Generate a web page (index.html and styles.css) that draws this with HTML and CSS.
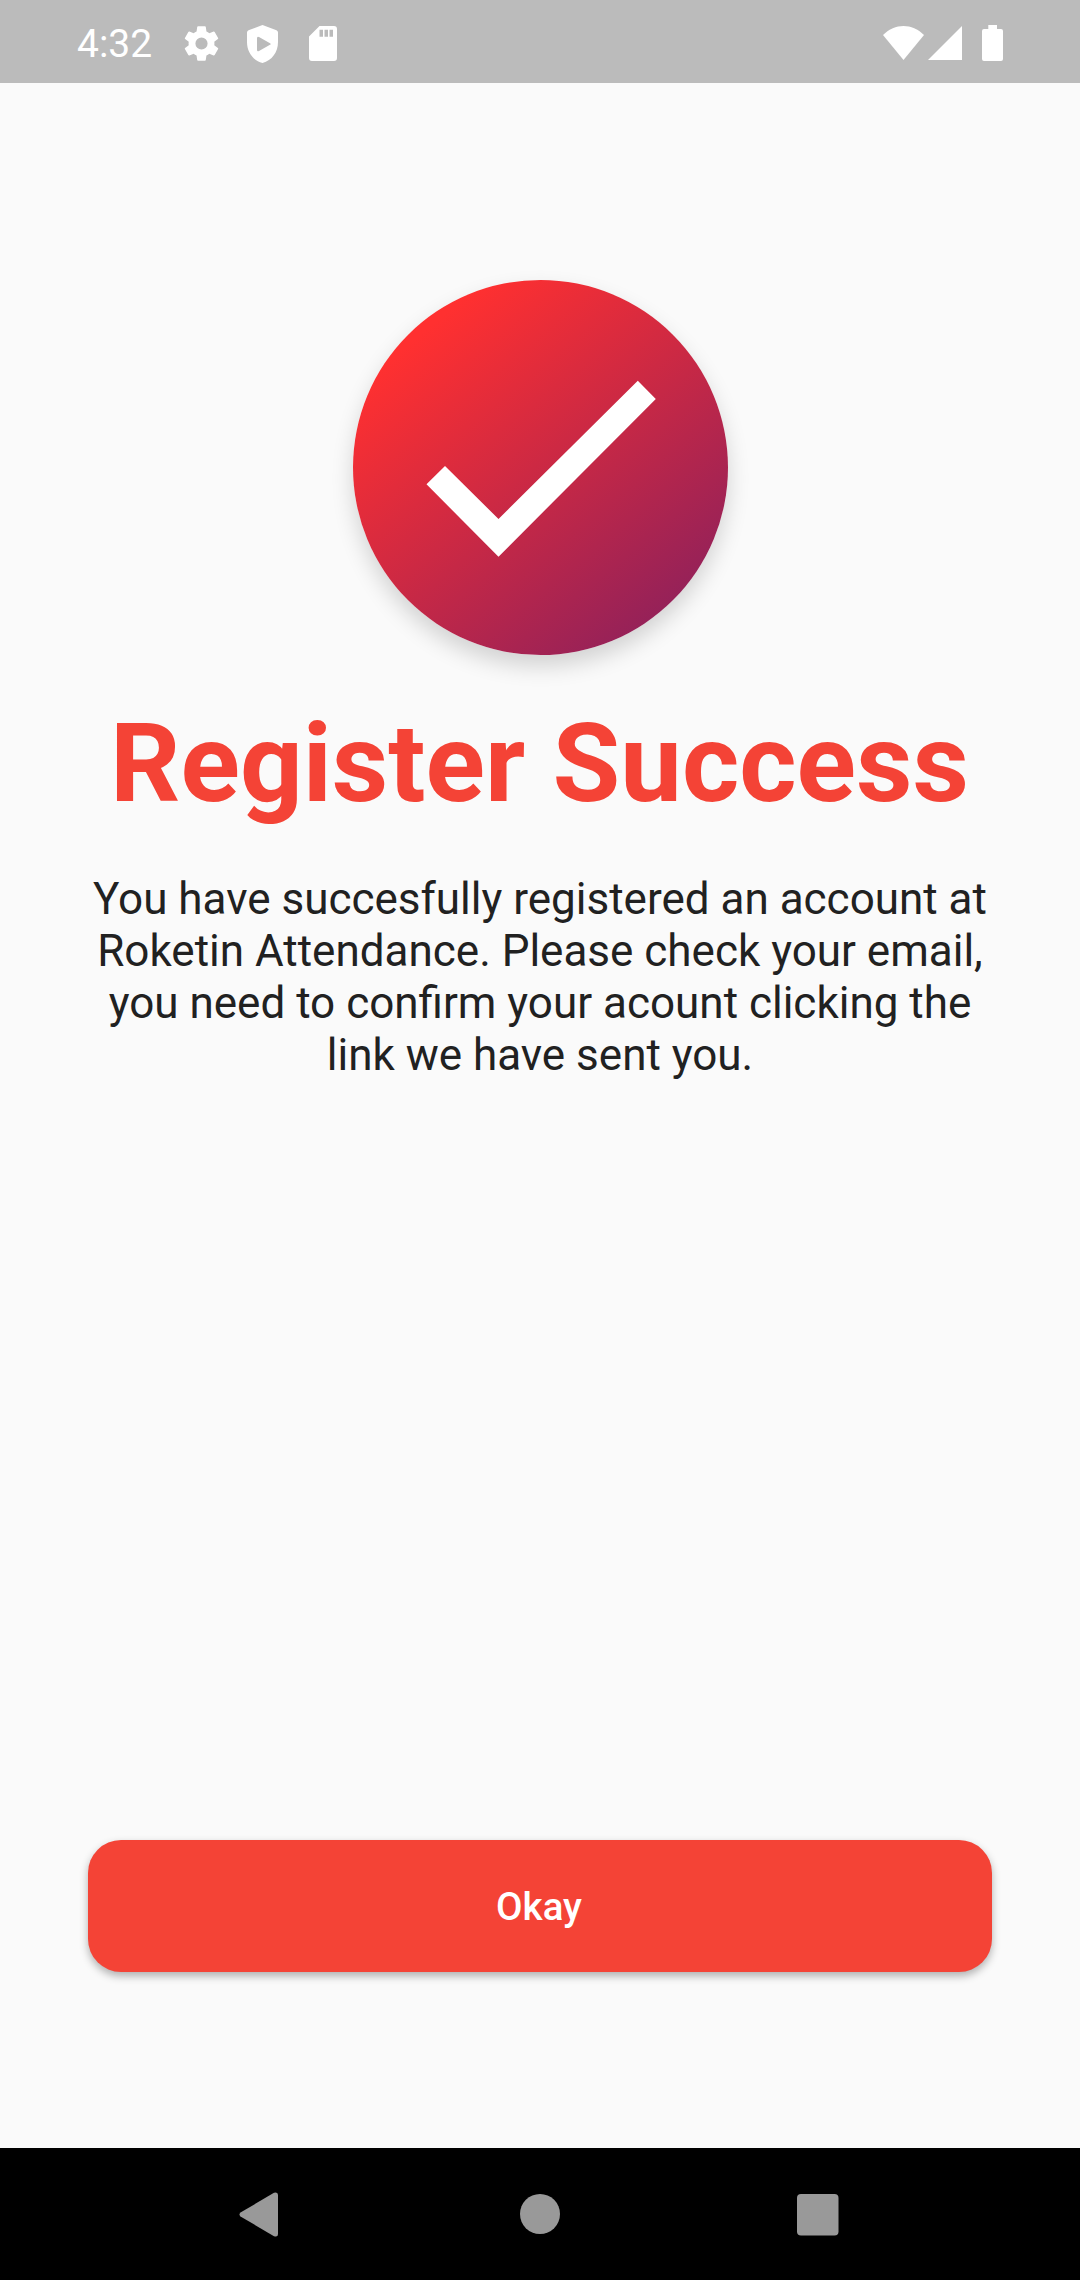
FILE: index.html
```html
<!DOCTYPE html>
<html lang="en">
<head>
<meta charset="utf-8">
<title>Register Success</title>
<link rel="stylesheet" href="styles.css">
</head>
<body>
<header class="status">
  <span class="time">4:32</span>
  <svg class="gear" viewBox="0 0 24 24"><path d="M19.14 12.94c.04-.3.06-.61.06-.94 0-.32-.02-.64-.07-.94l2.03-1.58a.49.49 0 0 0 .12-.61l-1.92-3.32a.49.49 0 0 0-.59-.22l-2.39.96a7 7 0 0 0-1.62-.94l-.36-2.54a.48.48 0 0 0-.48-.41h-3.84a.48.48 0 0 0-.47.41l-.36 2.54c-.59.24-1.13.57-1.62.94l-2.39-.96a.48.48 0 0 0-.59.22L2.74 8.87a.48.48 0 0 0 .12.61l2.03 1.58c-.05.3-.09.63-.09.94s.02.64.07.94l-2.03 1.58a.49.49 0 0 0-.12.61l1.92 3.32c.12.22.37.29.59.22l2.39-.96c.5.38 1.03.7 1.62.94l.36 2.54c.05.24.24.41.48.41h3.84c.24 0 .44-.17.47-.41l.36-2.54a7 7 0 0 0 1.62-.94l2.39.96c.22.08.47 0 .59-.22l1.92-3.32a.48.48 0 0 0-.12-.61zM12 15.4a3.4 3.4 0 1 1 0-6.800 3.400 3.400 0 0 1 0 6.800z"/></svg>
  <svg class="shield" viewBox="0 0 31 38"><path fill-rule="evenodd" d="M15.500 0 1.500 5.300Q0 6 0 7.500V17C0 27 6 35.500 15.500 38 25 35.500 31 27 31 17V7.500Q31 6 29.500 5.300zM10 13.200Q10 11 12 12L23 18.200Q24.500 19 23 19.800L12 26Q10 27 10 24.800z"/></svg>
  <svg class="sd" viewBox="0 0 28 35"><path fill-rule="evenodd" d="M10.500 0H25a3 3 0 0 1 3 3v29a3 3 0 0 1-3 3H3a3 3 0 0 1-3-3V10.500zM10.500 3.800v7h3.500v-7zM15.500 3.800v7H19v-7zM20.500 3.800v7H24v-7z"/></svg>
  <span class="spacer"></span>
  <svg class="wifi" viewBox="0 0 41 34"><path d="M0 9C12-3 29-3 41 9L20.500 34z"/></svg>
  <svg class="signal" viewBox="0 0 34 34"><path d="M34 0v34H0z"/></svg>
  <svg class="battery" viewBox="0 0 21 36"><path d="M6.300 0h8.700v4h4a2 2 0 0 1 2 2v28a2 2 0 0 1-2 2H2a2 2 0 0 1-2-2V6a2 2 0 0 1 2-2h4.300z"/></svg>
</header>
<main class="content">
  <div class="badge"><svg viewBox="0 0 375 375"><path d="M73.500 204.300 92 186 145.500 239 284.800 100.700 302.800 119 145.500 276.700z"/></svg></div>
  <h1 class="title">Register Success</h1>
  <p class="message">You have succesfully registered an account at<br>Roketin Attendance. Please check your email,<br>you need to confirm your acount clicking the<br>link we have sent you.</p>
  <button class="okay">Okay</button>
</main>
<nav class="nav">
  <svg viewBox="0 0 48 48"><path d="M4.500 22.500Q2.500 24.500 4.500 26.500L38 46.200Q42 47.500 42 44V5Q42 1.500 38 2.800z"/></svg>
  <svg viewBox="0 0 48 48"><circle cx="25" cy="24" r="20"/></svg>
  <svg viewBox="0 0 48 48"><rect x="3" y="4" width="41.500" height="41.500" rx="4"/></svg>
</nav>
</body>
</html>
```
FILE: styles.css
```css
* { box-sizing: border-box; }
body { margin: 0; width: 1080px; height: 2280px; display: flex; flex-direction: column; background: #fafafa; font-family: Roboto, sans-serif; }
svg { display: block; flex: none; }
.status { height: 83px; background: #bbb; display: flex; align-items: center; padding: 4px 77px 0 77px; color: #fff; fill: #fff; }
.time { font-size: 39px; width: 103px; padding-top: 1px; }
.gear { width: 43px; height: 43px; }
.shield { width: 31px; height: 38px; margin-left: 24px; }
.sd { width: 28px; height: 35px; margin-left: 31px; }
.spacer { flex: 1; }
.wifi { width: 41px; height: 34px; margin-bottom: 2px; }
.signal { width: 34px; height: 34px; margin-left: 4px; margin-bottom: 2px; }
.battery { width: 21px; height: 36px; margin-left: 20px; margin-bottom: 1px; }
.content { flex: 1; display: flex; flex-direction: column; align-items: center; padding: 197px 88px 176px; }
.badge { width: 375px; height: 375px; border-radius: 50%; background: linear-gradient(140deg, #ff3030 16%, #8c205c 92%); box-shadow: 0 11px 22px rgba(0,0,0,.16); fill: #fff; }
.title { margin: 44px 0 0; padding-right: 1px; font-size: 110px; line-height: 129px; font-weight: 700; color: #f44336; white-space: nowrap; }
.message { margin: 45px 0 0; font-size: 44px; line-height: 52px; text-align: center; color: #212121; white-space: nowrap; }
.okay { margin-top: auto; width: 904px; height: 132px; padding: 0 2px 0 0; border: 0; border-radius: 33px; background: #f44336; color: #fff; font: 500 38.500px Roboto, sans-serif; box-shadow: 0 4px 8px rgba(0,0,0,.3); }
.nav { height: 132px; background: #000; display: flex; justify-content: space-between; align-items: center; padding: 0 238px 0 236px; fill: #999; }
.nav svg { width: 48px; height: 48px; }
```
